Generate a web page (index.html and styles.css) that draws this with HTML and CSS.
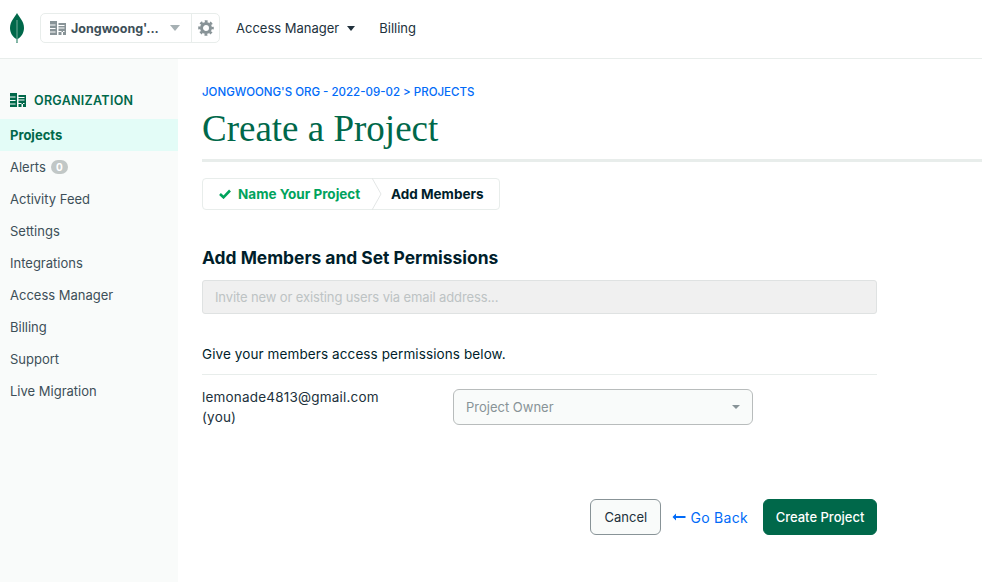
FILE: index.html
```html
<!DOCTYPE html>
<html lang="en">
<head>
<meta charset="utf-8">
<title>Create a Project</title>
<link rel="stylesheet" href="styles.css">
</head>
<body>
<header class="topbar">
  <svg class="leaf" width="16" height="32" viewBox="0 0 16 32"><path d="M8 1C10 5 15 9 15 16C15 21 12 25 8.600 27L8.500 31H7.500L7.400 27C4 25 1 21 1 16C1 9 6 5 8 1Z" fill="#00684a"/><path d="M8 8V30" stroke="#c3dcd2" stroke-width=".6"/></svg>
  <div class="org-picker">
    <div class="org-main">
      <svg class="org-icon" width="16" height="14" viewBox="0 0 16 14"><path d="M0 0H7V14H0V11.500H5.500V10.500H0V8H5.500V7H0V4.500H5.500V3.500H0ZM8.500 2H16V14H13V10H11.500V14H8.500V11H14.500V10H8.500V7.500H14.500V6.500H8.500V5H14.500V4H8.500Z" fill="#889397"/></svg>
      <span class="org-name">Jongwoong'...</span>
      <span class="caret caret-grey"></span>
    </div>
    <div class="org-gear">
      <svg width="16" height="16" viewBox="0 0 16 16"><circle cx="8" cy="8" r="4.500" fill="none" stroke="#889397" stroke-width="3"/><circle cx="8" cy="8" r="6.600" fill="none" stroke="#889397" stroke-width="2.400" stroke-dasharray="2.800 2.384" stroke-dashoffset="1.400"/></svg>
    </div>
  </div>
  <nav class="topnav">
    <a class="topnav-item">Access Manager<span class="caret caret-dark"></span></a>
    <a class="topnav-item">Billing</a>
  </nav>
</header>
<div class="body">
  <aside class="sidebar">
    <div class="side-head">
      <svg width="16" height="14" viewBox="0 0 16 14"><path d="M0 0H7V14H0V11.500H5.500V10.500H0V8H5.500V7H0V4.500H5.500V3.500H0ZM8.500 2H16V14H13V10H11.500V14H8.500V11H14.500V10H8.500V7.500H14.500V6.500H8.500V5H14.500V4H8.500Z" fill="#00684a"/></svg>
      <span>ORGANIZATION</span>
    </div>
    <a class="side-item side-active">Projects</a>
    <a class="side-item">Alerts<span class="badge">0</span></a>
    <a class="side-item">Activity Feed</a>
    <a class="side-item">Settings</a>
    <a class="side-item">Integrations</a>
    <a class="side-item">Access Manager</a>
    <a class="side-item">Billing</a>
    <a class="side-item">Support</a>
    <a class="side-item">Live Migration</a>
  </aside>
  <main class="content">
    <div class="crumbs">JONGWOONG'S ORG - 2022-09-02 &gt; PROJECTS</div>
    <h1 class="title">Create a Project</h1>
    <div class="steps">
      <div class="step step-done">
        <svg width="12" height="10" viewBox="0 0 12 10"><path d="M1 5L4.500 8.300L11 1.500" fill="none" stroke="#00a35c" stroke-width="2.600"/></svg>
        <span>Name Your Project</span>
      </div>
      <svg class="step-sep" width="10" height="32" viewBox="0 0 10 32"><path d="M0 0L9 16L0 32" fill="none" stroke="#e3e6e6"/></svg>
      <div class="step step-current">Add Members</div>
    </div>
    <div class="form">
      <h2 class="heading">Add Members and Set Permissions</h2>
      <div class="invite">Invite new or existing users via email address...</div>
      <p class="hint">Give your members access permissions below.</p>
      <div class="member">
        <div class="member-mail">lemonade4813@gmail.com<br>(you)</div>
        <div class="select">
          <span>Project Owner</span>
          <span class="caret caret-small"></span>
        </div>
      </div>
      <div class="actions">
        <button class="btn btn-cancel">Cancel</button>
        <a class="back"><svg width="14" height="8" viewBox="0 0 14 8"><path d="M4 0.500L0.500 4L4 7.500V5H13.500V3H4Z" fill="#016bf8"/></svg>Go Back</a>
        <button class="btn btn-create">Create Project</button>
      </div>
    </div>
  </main>
</div>
</body>
</html>
```
FILE: styles.css
```css
* { box-sizing: border-box; }
html, body { margin: 0; height: 100%; }
body {
  width: 982px;
  height: 582px;
  overflow: hidden;
  background: #fff;
  font-family: "Inter", "Liberation Sans", sans-serif;
  font-size: 13.500px;
  color: #001e2b;
  display: flex;
  flex-direction: column;
}
.topbar {
  height: 59px;
  flex: none;
  display: flex;
  align-items: center;
  border-bottom: 1px solid #e8edeb;
  padding: 0 0 2px 9px;
}
.leaf { margin-right: 15px; }
.org-picker {
  width: 180px;
  height: 30px;
  display: flex;
  border: 1px solid #e8edeb;
  border-radius: 5px;
}
.org-main {
  width: 151px;
  display: flex;
  align-items: center;
  padding-left: 9px;
  border-right: 1px solid #e8edeb;
}
.org-icon { margin-right: 5px; }
.org-name { font-weight: 700; font-size: 12.500px; color: #3d4f58; width: 99px; white-space: nowrap; }
.org-gear { flex: 1; display: flex; align-items: center; justify-content: center; }
.caret { display: inline-block; width: 0; height: 0; border-style: solid; border-color: transparent; }
.caret-grey { border-width: 6px 5px 0; border-top-color: #a6b0b3; }
.caret-dark { border-width: 5px 4.500px 0; border-top-color: #21313c; margin-left: 8px; }
.caret-small { border-width: 4px 4.500px 0; border-top-color: #889397; }
.topnav { display: flex; margin-left: 16px; }
.topnav-item { display: flex; align-items: center; margin: 0 24px 0 0; font-size: 13px; color: #21313c; }
.body { flex: 1; display: flex; min-height: 0; }
.sidebar { width: 178px; flex: none; background: #f9fbfa; padding-top: 24px; }
.side-head {
  height: 36px;
  display: flex;
  align-items: center;
  gap: 8px;
  padding: 0 0 2px 10px;
  color: #00684a;
  font-weight: 600;
  font-size: 12.500px;
  letter-spacing: .3px;
}
.side-item {
  height: 32px;
  display: flex;
  align-items: center;
  padding-left: 10px;
  font-size: 13px;
  color: #3d4f58;
}
.side-active { background: #e3fcf7; color: #00684a; font-weight: 700; }
.badge {
  width: 17px;
  height: 14px;
  margin-left: 5px;
  border-radius: 7px;
  background: #c1c7c6;
  color: #fff;
  font-size: 10px;
  font-weight: 700;
  display: flex;
  align-items: center;
  justify-content: center;
}
.content { flex: 1; min-width: 0; padding: 24px 0 0 24px; }
.crumbs { color: #016bf8; font-size: 11.500px; font-weight: 500; line-height: 18px; }
.title {
  margin: 7px 0 0;
  font-family: "Liberation Serif", serif;
  font-weight: 400;
  font-size: 37px;
  line-height: 42px;
  color: #00684a;
  height: 54px;
  border-bottom: 3px solid #e8edeb;
}
.steps {
  margin-top: 16px;
  width: 298px;
  height: 32px;
  display: flex;
  align-items: center;
  border: 1px solid #e8edeb;
  border-radius: 4px;
  font-weight: 700;
  font-size: 13.500px;
}
.step { display: flex; align-items: center; }
.step-done { color: #00a35c; padding-left: 16px; gap: 7px; width: 169px; }
.step-sep { flex: none; }
.step-current { color: #001e2b; margin-left: 9px; }
.form { width: 675px; }
.heading { margin: 36px 0 0; font-size: 17.400px; line-height: 24px; font-weight: 700; color: #001e2b; }
.invite {
  margin-top: 10px;
  height: 34px;
  background: #f0f0f0;
  border: 1px solid #dfe2e2;
  border-radius: 3px;
  padding: 0 0 1px 12px;
  display: flex;
  align-items: center;
  color: #bdc3c4;
  font-size: 13px;
  letter-spacing: -.12px;
}
.hint { margin: 31px 0 0; line-height: 19px; padding-bottom: 10px; border-bottom: 1px solid #e8edeb; letter-spacing: .1px; }
.member { margin-top: 11px; display: flex; align-items: flex-start; }
.member-mail { width: 251px; margin-top: 1px; line-height: 20px; color: #21313c; letter-spacing: .2px; }
.select {
  margin-top: 3px;
  width: 300px;
  height: 36px;
  border: 1px solid #b8bcbc;
  border-radius: 6px;
  background: #f9fbfa;
  padding: 0 12px;
  display: flex;
  align-items: center;
  justify-content: space-between;
  color: #889397;
  font-size: 13px;
}
.actions { margin-top: 72px; display: flex; align-items: center; justify-content: flex-end; }
.btn { height: 36px; border-radius: 6px; font-family: inherit; font-size: 13px; padding: 0; }
.btn-cancel { width: 71px; background: #f9fbfa; border: 1px solid #889397; color: #21313c; }
.back { margin: 0 15px 0 11px; display: flex; align-items: center; gap: 4px; color: #016bf8; font-size: 14px; letter-spacing: .3px; }
.btn-create { width: 114px; background: #00684a; border: 1px solid #00684a; color: #fff; font-weight: 500; }
```
